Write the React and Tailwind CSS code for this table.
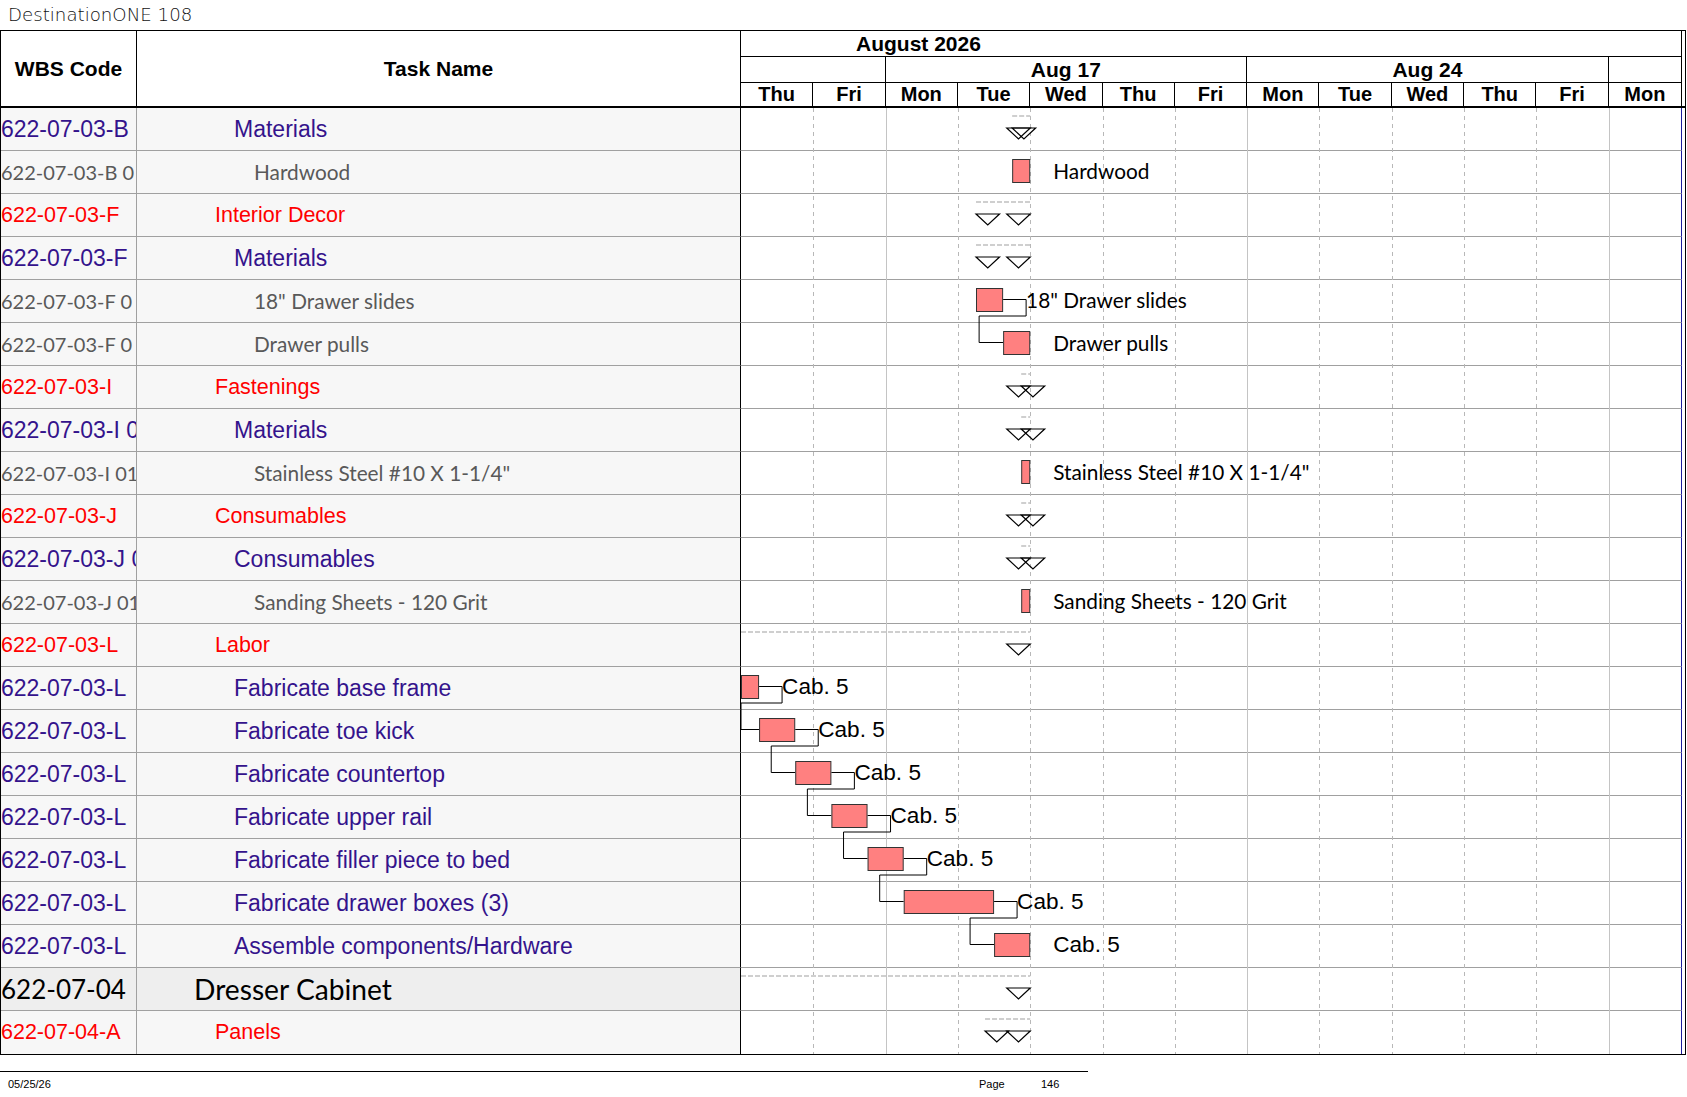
import React from 'react';

// timeline geometry (px)
const DAY = 72.31;
const ROW_H = 43;
const X = (t) => t * DAY;

const DAYS = ['Thu', 'Fri', 'Mon', 'Tue', 'Wed', 'Thu', 'Fri', 'Mon', 'Tue', 'Wed', 'Thu', 'Fri', 'Mon'];
const WEEK_LINES = [2, 7, 12];

const rows = [
  { wbs: '622-07-03-B', name: 'Materials', kind: 'mid', sum: [3.75, 4] },
  { wbs: '622-07-03-B 0', name: 'Hardwood', kind: 'leaf', bar: [3.75, 4], label: 'Hardwood' },
  { wbs: '622-07-03-F', name: 'Interior Decor', kind: 'red', sum: [3.25, 4] },
  { wbs: '622-07-03-F', name: 'Materials', kind: 'mid', sum: [3.25, 4] },
  { wbs: '622-07-03-F 0', name: '18" Drawer slides', kind: 'leaf', bar: [3.25, 3.625], label: '18" Drawer slides', link: true },
  { wbs: '622-07-03-F 0', name: 'Drawer pulls', kind: 'leaf', bar: [3.625, 4], label: 'Drawer pulls' },
  { wbs: '622-07-03-I', name: 'Fastenings', kind: 'red', sum: [3.875, 4] },
  { wbs: '622-07-03-I 01', name: 'Materials', kind: 'mid', sum: [3.875, 4] },
  { wbs: '622-07-03-I 01', name: 'Stainless Steel #10 X 1-1/4"', kind: 'leaf', bar: [3.875, 4], label: 'Stainless Steel #10 X 1-1/4"' },
  { wbs: '622-07-03-J', name: 'Consumables', kind: 'red', sum: [3.875, 4] },
  { wbs: '622-07-03-J 01', name: 'Consumables', kind: 'mid', sum: [3.875, 4] },
  { wbs: '622-07-03-J 01', name: 'Sanding Sheets - 120 Grit', kind: 'leaf', bar: [3.875, 4], label: 'Sanding Sheets - 120 Grit' },
  { wbs: '622-07-03-L', name: 'Labor', kind: 'red', sum: [-1, 4] },
  { wbs: '622-07-03-L', name: 'Fabricate base frame', kind: 'mid', bar: [0, 0.25], label: 'Cab. 5', link: true, arial: true },
  { wbs: '622-07-03-L', name: 'Fabricate toe kick', kind: 'mid', bar: [0.25, 0.75], label: 'Cab. 5', link: true, arial: true },
  { wbs: '622-07-03-L', name: 'Fabricate countertop', kind: 'mid', bar: [0.75, 1.25], label: 'Cab. 5', link: true, arial: true },
  { wbs: '622-07-03-L', name: 'Fabricate upper rail', kind: 'mid', bar: [1.25, 1.75], label: 'Cab. 5', link: true, arial: true },
  { wbs: '622-07-03-L', name: 'Fabricate filler piece to bed', kind: 'mid', bar: [1.75, 2.25], label: 'Cab. 5', link: true, arial: true },
  { wbs: '622-07-03-L', name: 'Fabricate drawer boxes (3)', kind: 'mid', bar: [2.25, 3.5], label: 'Cab. 5', link: true, arial: true },
  { wbs: '622-07-03-L', name: 'Assemble components/Hardware', kind: 'mid', bar: [3.5, 4], label: 'Cab. 5', arial: true },
  { wbs: '622-07-04', name: 'Dresser Cabinet', kind: 'top', sum: [-1, 4] },
  { wbs: '622-07-04-A', name: 'Panels', kind: 'red', sum: [3.375, 4] },
];

const kinds = {
  red: {
    bg: 'bg-[#f7f7f7]',
    wbs: "font-['Liberation_Sans',Arial,sans-serif] text-[21.5px] text-[#ff0000]",
    name: "pl-[78px] font-['Liberation_Sans',Arial,sans-serif] text-[21.5px] text-[#ff0000]",
  },
  mid: {
    bg: 'bg-[#f7f7f7]',
    wbs: "font-['Liberation_Sans',Arial,sans-serif] text-[23px] text-[#34138c]",
    name: "pl-[97px] font-['Liberation_Sans',Arial,sans-serif] text-[23px] text-[#34138c]",
  },
  leaf: {
    bg: 'bg-[#f7f7f7]',
    wbs: "font-['Lato',sans-serif] text-[20px] text-[#595959]",
    name: "pl-[117px] font-['Lato',sans-serif] text-[20.8px] text-[#595959]",
  },
  top: {
    bg: 'bg-[#eeeeee]',
    wbs: "font-['Lato',sans-serif] text-[26px] text-black",
    name: "pl-[57px] font-['Lato',sans-serif] text-[28.2px] text-black",
  },
};

const Row = ({ r, last }) => {
  const k = kinds[r.kind];
  const bottom = last ? '' : 'border-b';
  return (
    <div className="flex h-[43px]">
      <div className={`w-[136px] shrink-0 flex items-center overflow-hidden whitespace-nowrap border-r border-[#a0a0a0] ${bottom} ${k.bg}`}>
        <span className={k.wbs}>{r.wbs}</span>
      </div>
      <div className={`w-[604px] shrink-0 flex items-center overflow-hidden whitespace-nowrap border-r border-r-black border-b-[#a0a0a0] ${bottom} ${k.bg}`}>
        <span className={k.name}>{r.name}</span>
      </div>
      <div className={`w-[941px] shrink-0 bg-white border-r border-r-[#1c1c9c] border-b-[#a0a0a0] ${bottom}`} />
      <div className="w-[3px] shrink-0" />
    </div>
  );
};

const GanttOverlay = () => {
  const h = rows.length * ROW_H;
  const items = [];

  // day / week grid
  for (let d = 1; d < 13; d++) {
    const x = Math.round(X(d)) + 0.5;
    const week = WEEK_LINES.includes(d);
    items.push(
      <line key={`g${d}`} x1={x} x2={x} y1={0} y2={h} stroke={week ? '#c4c4c4' : '#b8b8b8'} strokeWidth={1} strokeDasharray={week ? undefined : '4 4'} />
    );
  }

  rows.forEach((r, i) => {
    const top = i * ROW_H;
    if (r.sum) {
      const [s, e] = r.sum;
      const xs = Math.max(X(s), 0);
      const xe = X(e);
      items.push(
        <line key={`d${i}`} x1={xs} x2={xe} y1={top + 8} y2={top + 8} stroke="#cfcfcf" strokeWidth={2} strokeDasharray="5 2" />
      );
      const tri = (x1, key) => (
        <polygon key={key} points={`${x1},${top + 20} ${x1 + 23.5},${top + 20} ${x1 + 11.75},${top + 31}`} fill="none" stroke="#000" strokeWidth={1.2} />
      );
      if (s >= 0) items.push(tri(X(s), `ts${i}`));
      items.push(tri(xe - 23.5, `te${i}`));
    }
    if (r.bar) {
      const [s, e] = r.bar;
      const cy = top + 19.5;
      if (r.link) {
        const next = rows[i + 1].bar;
        const lx = X(e) + 23;
        const nx = X(next[0]);
        const turnX = Math.max(nx - 24, 0);
        const ncy = top + ROW_H + 19.5;
        items.push(
          <polyline key={`l${i}`} points={`${X(e)},${cy} ${lx},${cy} ${lx},${top + 36} ${turnX},${top + 36} ${turnX},${ncy} ${nx},${ncy}`} fill="none" stroke="#000" strokeWidth={1} />
        );
      }
      items.push(
        <rect key={`b${i}`} x={X(s) + 0.5} y={top + 8.5} width={X(e) - X(s) - 1} height={23} fill="#ff8080" stroke="#333" strokeWidth={1} />
      );
    }
  });

  return (
    <svg className="absolute left-[740px] top-0 pointer-events-none overflow-visible" width={942} height={h}>
      {items}
    </svg>
  );
};

const Labels = () => (
  <>
    {rows.map((r, i) =>
      r.label ? (
        <div
          key={i}
          className={`absolute whitespace-nowrap leading-none -translate-y-1/2 text-black ${r.arial ? "font-['Liberation_Sans',Arial,sans-serif] text-[22.6px]" : "font-['Lato',sans-serif] text-[20.8px]"}`}
          style={{ left: 740 + X(r.bar[1]) + 23, top: i * ROW_H + 20 }}
        >
          {r.label}
        </div>
      ) : null
    )}
  </>
);

export default function App() {
  return (
    <div className="w-[1687px] h-[1097px] bg-white overflow-hidden font-['Liberation_Sans',Arial,sans-serif] text-black">
      <div className="h-[30px] flex items-center pl-[8px] font-['DejaVu_Sans',sans-serif] font-extralight text-[18.2px] text-[#111]">
        DestinationONE 108
      </div>

      <div className="w-[1686px] border border-black">
        {/* header */}
        <div className="flex h-[77px] border-b-2 border-black">
          <div className="w-[136px] shrink-0 border-r border-black flex items-center justify-center font-bold text-[21px] leading-none">
            WBS Code
          </div>
          <div className="w-[604px] shrink-0 border-r border-black flex items-center justify-center font-bold text-[21px] leading-none">
            Task Name
          </div>
          <div className="w-[941px] shrink-0 border-r border-black flex flex-col">
            <div className="h-[26px] border-b border-black flex items-center pl-[115px] pb-[1px] font-bold text-[21px] leading-none">
              August 2026
            </div>
            <div className="h-[26px] border-b border-black grid grid-cols-13 font-bold text-[21px] leading-none">
              <div className="col-span-2 border-r border-black" />
              <div className="col-span-5 border-r border-black flex items-center justify-center pb-[1px]">Aug 17</div>
              <div className="col-span-5 border-r border-black flex items-center justify-center pb-[1px]">Aug 24</div>
              <div className="col-span-1" />
            </div>
            <div className="flex-1 grid grid-cols-13 font-bold text-[20px] leading-none">
              {DAYS.map((d, i) => (
                <div key={i} className={`flex items-center justify-center pb-[1px] ${i < 12 ? 'border-r border-black' : ''}`}>
                  {d}
                </div>
              ))}
            </div>
          </div>
          <div className="w-[3px] shrink-0" />
        </div>

        {/* body */}
        <div className="relative">
          {rows.map((r, i) => (
            <Row key={i} r={r} last={i === rows.length - 1} />
          ))}
          <GanttOverlay />
          <Labels />
        </div>
      </div>

      {/* footer */}
      <div className="mt-[16px] w-[1088px] border-t border-black" />
      <div className="flex pt-[6px] text-[11px] leading-[13px]">
        <span className="w-[979px] pl-[8px]">05/25/26</span>
        <span className="w-[62px]">Page</span>
        <span>146</span>
      </div>
    </div>
  );
}
